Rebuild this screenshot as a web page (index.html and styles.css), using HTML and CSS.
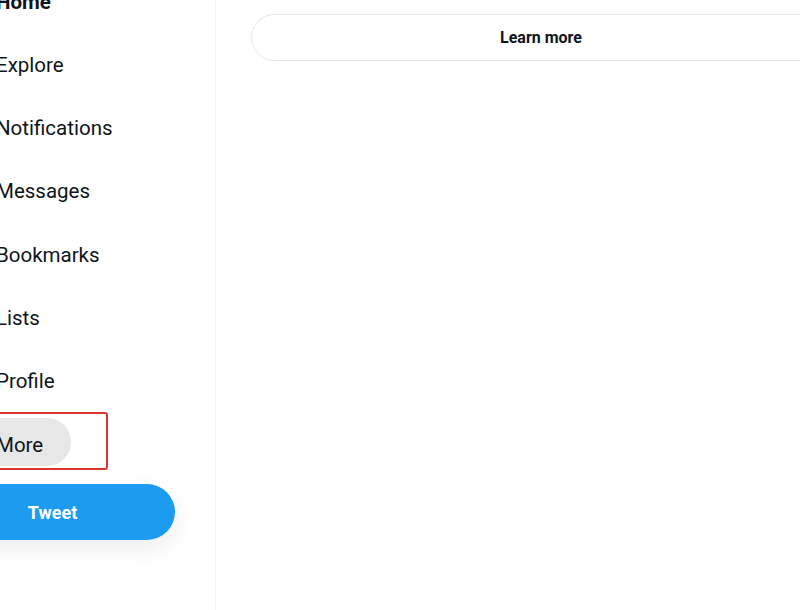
FILE: index.html
```html
<!DOCTYPE html>
<html lang="en">
<head>
<meta charset="UTF-8">
<meta name="viewport" content="width=device-width, initial-scale=1.0">
<title>Home</title>
<link rel="stylesheet" href="styles.css">
</head>
<body>
    <div class="layout">
        <nav class="sidebar">
            <div class="nav-list">
                <a class="nav-item active" href="#"><span class="pill">Home</span></a>
                <a class="nav-item" href="#"><span class="pill">Explore</span></a>
                <a class="nav-item" href="#"><span class="pill">Notifications</span></a>
                <a class="nav-item" href="#"><span class="pill">Messages</span></a>
                <a class="nav-item" href="#"><span class="pill">Bookmarks</span></a>
                <a class="nav-item" href="#"><span class="pill">Lists</span></a>
                <a class="nav-item" href="#"><span class="pill">Profile</span></a>
                <a class="nav-item more" href="#">
                    <span class="pill hover">More</span>
                    <span class="highlight"></span>
                </a>
            </div>
            <button class="tweet-btn">Tweet</button>
        </nav>

        <main class="content">
            <button class="learn-btn">Learn more</button>
        </main>
    </div>
</body>
</html>
```

FILE: styles.css
```css
body {
    margin: 0;
    height: 610px;
    overflow: hidden;
    background: #fff;
    font-family: Roboto, "Liberation Sans", Arial, sans-serif;
    color: #0f1419;
}
.layout {
    display: flex;
    height: 100%;
}

/* left navigation */
.sidebar {
    flex: none;
    width: 285px;
    margin-left: -70px;
    border-right: 1px solid #eff3f4;
    display: flex;
    flex-direction: column;
}
.nav-list {
    display: flex;
    flex-direction: column;
    margin-top: -33px;
}
.nav-item {
    position: relative;
    display: block;
    padding: 7.65px 0;
    color: #0f1419;
    text-decoration: none;
}
.pill {
    box-sizing: border-box;
    display: inline-flex;
    align-items: center;
    height: 48px;
    padding: 6px 28px 0 66px;
    border-radius: 24px;
    font-size: 20.5px;
    line-height: 24px;
}
.nav-item.active .pill {
    font-weight: 700;
}
.pill.hover {
    background: #e7e7e8;
}
.highlight {
    position: absolute;
    top: 2px;
    left: 40px;
    width: 134px;
    height: 54px;
    border: 2.5px solid #d9362d;
    border-radius: 3px;
}

.tweet-btn {
    width: 245px;
    height: 56px;
    margin-top: 11px;
    border: none;
    border-radius: 28px;
    background: #1d9bf0;
    color: #fff;
    font-family: inherit;
    font-size: 18px;
    font-weight: 700;
    box-shadow: 0 8px 24px rgba(0, 0, 0, 0.08);
}

/* main column */
.content {
    flex: none;
    padding: 14px 35px;
}
.learn-btn {
    width: 580px;
    height: 47px;
    border: 1px solid #e3e7e9;
    border-radius: 24px;
    background: #fff;
    color: #0f1419;
    font-family: inherit;
    font-size: 16px;
    font-weight: 700;
}
```
